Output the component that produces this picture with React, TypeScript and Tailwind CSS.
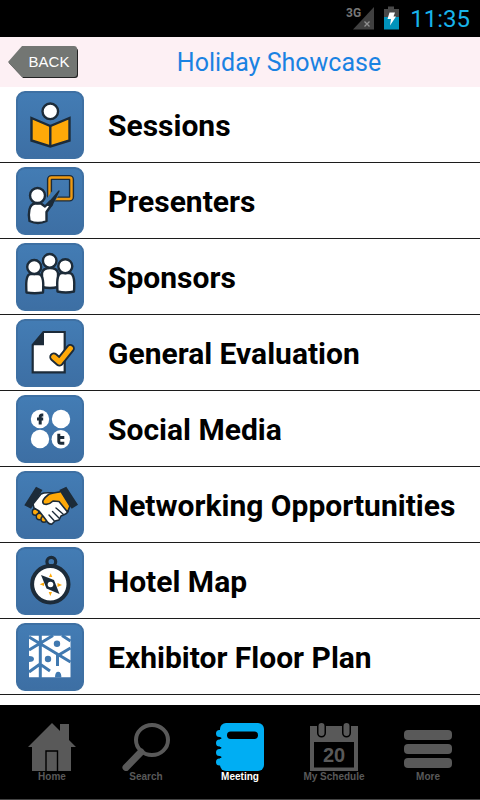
import type { ReactNode } from 'react';

const INK = '#1c2b39';
const GOLD = '#ffa908';
const TILE = '#4079b0';

function Tile({ children }: { children: ReactNode }) {
  return (
    <span className="block size-[68px] shrink-0 overflow-hidden rounded-[9px] border-2 border-[#3e70a3] bg-linear-to-b from-[#437cb4] to-[#3d6fa4]">
      <svg viewBox="2 2 64 64" className="block size-full" aria-hidden="true">
        {children}
      </svg>
    </span>
  );
}

const bust = { fill: '#fff', stroke: INK, strokeWidth: 2.4 };

const sessions = (
  <g stroke={INK} strokeWidth="2.4">
    <circle cx="34.3" cy="20.3" r="7.8" fill="#fff" />
    <path d="M15.5 27 34.3 35 53.5 27V49.5L34.3 55.5 15.5 49.5Z" fill={GOLD} />
    <path d="M34.3 35V55" />
  </g>
);

const presenters = (
  <g>
    <rect x="33.5" y="10.5" width="22" height="21.5" rx="2" fill="none" stroke={INK} strokeWidth="5.2" />
    <rect x="33.5" y="10.5" width="22" height="21.5" rx="2" fill="none" stroke="#f09a10" strokeWidth="2.4" />
    <path d="M30 39 39 27" stroke={TILE} strokeWidth="8" />
    <path d="M13.5 54C12 46 13 37 19 36.5H25L29 39.5 34 34.5 36 37 30.5 45V54Q22 58 13.5 54Z" {...bust} strokeLinejoin="round" />
    <path d="M31 38 43 24 35.5 39Z" fill={INK} stroke={INK} strokeWidth="1.4" strokeLinejoin="round" />
    <circle cx="21.5" cy="28.5" r="7.5" {...bust} />
  </g>
);

const sponsors = (
  <g {...bust} strokeLinejoin="round">
    <path d="M26 44V30Q27 25 34 25T42 30V44Q34 46 26 44Z" />
    <circle cx="33.7" cy="17.8" r="6.8" />
    <path d="M10.5 49.5C10 42 9.5 31 15 31H22C28 31 27.5 42 27 49.5Q18.5 51 10.5 49.5Z" />
    <path d="M41.5 48.5C41 41 40.5 30 46 30H53C59 30 58.5 41 58 48.5Q50 50.5 41.5 48.5Z" />
    <circle cx="18.2" cy="24" r="7" />
    <circle cx="49.3" cy="23.2" r="7" />
  </g>
);

const evaluation = (
  <g>
    <path d="M16.7 26 27.5 13H48.7V53.3H16.7Z" fill="#fff" stroke={INK} strokeWidth="2.2" />
    <path d="M16.7 26.3 28 13V26.3Z" fill={INK} />
    <g fill="none" strokeLinecap="round" strokeLinejoin="round">
      <path d="M37.8 38 43.5 43 54.3 29.5" stroke={INK} strokeWidth="9" />
      <path d="M37.8 38 43.5 43 54.3 29.5" stroke={GOLD} strokeWidth="5.2" />
    </g>
  </g>
);

const social = (
  <g>
    <g fill="#fff">
      <circle cx="24" cy="24" r="9.2" />
      <circle cx="45" cy="24" r="9.2" />
      <circle cx="24" cy="44" r="9.2" />
      <circle cx="44.8" cy="44.2" r="9.2" />
    </g>
    <g fill="none" stroke={INK} strokeWidth="3">
      <path d="M27.3 20H26Q24.2 20 24.2 22V29.5M21 24H27.2" />
      <path d="M42.8 38.8V46.2Q42.8 48.3 45 48.3H48.3M42.8 42.5H48.3" />
    </g>
  </g>
);

const handshake = (
  <g strokeLinejoin="round">
    <path d="M20 15.7 26.5 19 15 37.7 8.3 34.3ZM43.3 19 50.3 15.7 62 33.7 55.7 37.7Z" fill={INK} />
    <g fill={GOLD} stroke={INK} strokeWidth="1.4">
      <circle cx="19.5" cy="41" r="3.2" />
      <circle cx="23.5" cy="45.5" r="3.2" />
      <circle cx="28" cy="48.3" r="3" />
    </g>
    <path d="M25 23C31 20 36 23 42 22L52 37Q53 41 49.5 43L45 45 43 49 39 50 36 53Q33 54 30 49L27 45 23 40 18 37 17 33Z" fill="#fff" stroke={INK} strokeWidth="1.6" />
    <path d="M28 33C25 31 28 27 32 24C36 21 42 22 45 20.5L54 35 51.5 41 43 30.5 37 30C34 33 31 34 28 33Z" fill={GOLD} stroke={INK} strokeWidth="1.6" />
    <path d="M40 37 47 43M36.5 40.5 43 47M33 44 38 49.5" fill="none" stroke={INK} strokeWidth="1.4" strokeLinecap="round" />
  </g>
);

const compass = (
  <g>
    <circle cx="35.3" cy="14.8" r="4.4" fill="none" stroke={INK} strokeWidth="3.2" />
    <circle cx="34.3" cy="37.3" r="18.2" fill="#fff" stroke={INK} strokeWidth="4" />
    <path d="M33 30 34.7 26.3 36.3 30ZM41.5 36 46 38 41.5 40ZM32.7 45 34.3 49 36 45ZM28 35.5 23.7 37.3 28 39Z" fill={GOLD} />
    <path d="M25 28 38 33 43.5 47 30.5 41.5Z" fill={INK} />
    <circle cx="34.5" cy="37.5" r="2.8" fill="#fff" />
  </g>
);

const floorPlan = (
  <g>
    <path d="M13 12.7H54.5V54.3H13Z" fill="#fff" />
    <g fill="none" stroke={TILE} strokeWidth="3">
      <path d="M24.3 12V55M13 14 54.5 39M13 27 37 12.5M46 12.5 54.5 18M54.5 25 41 33M41.5 32V43M13 49 24 41 34 48" />
    </g>
    <g fill={TILE}>
      <circle cx="41" cy="20.8" r="3.2" />
      <circle cx="32" cy="36" r="3.2" />
      <path d="M13 33Q18 33 18 36T13 39ZM39 54.5Q39 48.8 42.2 48.8T45.4 54.5Z" />
    </g>
  </g>
);

const rows: { label: string; art: ReactNode }[] = [
  { label: 'Sessions', art: sessions },
  { label: 'Presenters', art: presenters },
  { label: 'Sponsors', art: sponsors },
  { label: 'General Evaluation', art: evaluation },
  { label: 'Social Media', art: social },
  { label: 'Networking Opportunities', art: handshake },
  { label: 'Hotel Map', art: compass },
  { label: 'Exhibitor Floor Plan', art: floorPlan },
];

const tabs: { label: string; active?: boolean; art: ReactNode }[] = [
  {
    label: 'Home',
    art: (
      <g>
        <path d="M0 24 24 0 32 8V1H41V17L48 24H43V48H4V24Z" fill="#595959" />
        <path d="M18 48V28H29.5V48" fill="none" stroke="#000" strokeWidth="1.4" />
      </g>
    ),
  },
  {
    label: 'Search',
    art: (
      <g fill="none" stroke="#595959">
        <ellipse cx="30" cy="17" rx="16" ry="15" strokeWidth="4" />
        <path d="M19 29 4 44.5" strokeWidth="7" strokeLinecap="round" />
      </g>
    ),
  },
  {
    label: 'Meeting',
    active: true,
    art: (
      <g>
        <rect x="4" width="44" height="48" rx="6" fill="#00aef3" />
        <path d="M3.5 10.5H8M3.5 20H8M3.5 29.5H8M3.5 39H8" stroke="#00aef3" strokeWidth="7" strokeLinecap="round" />
        <path d="M0 15.2H4.5M0 24.8H4.5M0 34.2H4.5" stroke="#000" strokeWidth="1.8" strokeLinecap="round" />
        <rect x="11" y="8.5" width="31" height="7.5" rx="3.7" fill="#000" />
      </g>
    ),
  },
  {
    label: 'My Schedule',
    art: (
      <g>
        <path d="M0 3H48V48H0Z" fill="#595959" />
        <path d="M4 19H44V44.5H4Z" fill="#000" />
        <path d="M11.5 3V10M36.5 3V10" stroke="#000" strokeWidth="9" strokeLinecap="round" />
        <path d="M11.5 3V10M36.5 3V10" stroke="#595959" strokeWidth="6" strokeLinecap="round" />
        <text x="24" y="39" textAnchor="middle" fill="#595959" fontSize="20" fontWeight="700">
          20
        </text>
      </g>
    ),
  },
  {
    label: 'More',
    art: (
      <g fill="#595959">
        <rect y="7" width="48" height="10" rx="4" />
        <rect y="21" width="48" height="10" rx="4" />
        <rect y="35" width="48" height="10" rx="4" />
      </g>
    ),
  },
];

function StatusBar() {
  return (
    <div className="flex h-[37px] items-center justify-end bg-black pr-2.5">
      <svg viewBox="0 0 54 28" className="mr-2.5 h-7 w-[54px]" aria-hidden="true">
        <text x="0" y="12" fill="#777" fontSize="12" fontWeight="700">
          3G
        </text>
        <path d="M7 24.5 28 2V24.5Z" fill="#404040" />
        <path d="M18.5 16.5 23.5 21.5M23.5 16.5 18.5 21.5" stroke="#909090" strokeWidth="1.3" />
        <path d="M38 4H42V1.5H48V4H53V12H38Z" fill="#484848" />
        <path d="M38 12H53V24.5H38Z" fill="#0092ba" />
        <path d="M43.5 7.5H49L47.5 11.5H50L44 20.5 45 14H41.5Z" fill="#fff" />
      </svg>
      <span className="text-2xl text-[#18b4ea]">11:35</span>
    </div>
  );
}

export default function App() {
  return (
    <div className="flex min-h-screen flex-col bg-white font-[Roboto,sans-serif] text-black">
      <StatusBar />
      <header className="flex h-[50px] items-center bg-[#fdf0f4] pl-2">
        <button type="button" className="relative h-8 w-[70px] shrink-0">
          <svg viewBox="0 0 70 32" className="absolute inset-0 size-full" aria-hidden="true">
            <path d="M1 17 15 2H67Q70 2 70 5V29Q70 32 67 32H15Z" fill="#222" />
            <path d="M0 16 14 0H66Q69 0 69 3V28Q69 31 66 31H14Z" fill="#737673" />
          </svg>
          <span className="relative block pl-3 font-['Liberation_Sans',Arial,sans-serif] text-[15px] leading-5 text-white">
            BACK
          </span>
        </button>
        <h1 className="flex-1 pt-0.5 text-center text-[25px] leading-8 text-[#1a82e2]">Holiday Showcase</h1>
      </header>

      <main className="flex-1 pb-[10px]">
        <ul>
          {rows.map((row) => (
            <li key={row.label} className="border-b border-[#1c1c1c]">
              <a href="#" className="flex h-[75px] items-center gap-6 pt-px pl-4">
                <Tile>{row.art}</Tile>
                <span className="pt-0.5 text-[30px] leading-9 font-bold whitespace-nowrap">{row.label}</span>
              </a>
            </li>
          ))}
        </ul>
      </main>

      <nav className="flex h-[95px] items-start border-b border-[#444] bg-black px-[5px] pt-[18px] font-['Liberation_Sans',Arial,sans-serif]">
        {tabs.map((tab) => (
          <button
            key={tab.label}
            type="button"
            aria-current={tab.active ? 'page' : undefined}
            className="flex flex-1 flex-col items-center"
          >
            <svg viewBox="0 0 48 48" className="size-12" aria-hidden="true">
              {tab.art}
            </svg>
            <span
              className={
                tab.active
                  ? 'text-[10px] leading-3 font-bold text-white'
                  : 'text-[10px] leading-3 font-bold text-[#595959]'
              }
            >
              {tab.label}
            </span>
          </button>
        ))}
      </nav>
    </div>
  );
}
